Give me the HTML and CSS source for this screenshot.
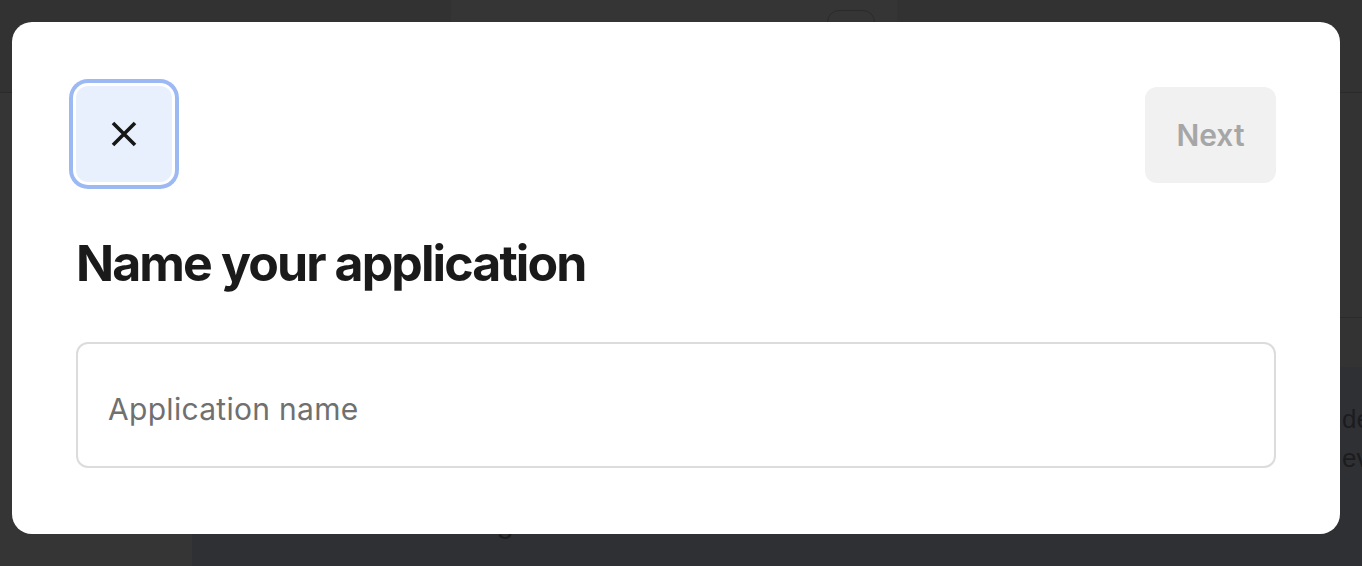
FILE: index.html
```html
<!DOCTYPE html>
<html lang="en">
<head>
<meta charset="utf-8">
<title>Name your application</title>
<link rel="stylesheet" href="styles.css">
</head>
<body>
<div class="app">
  <header class="topbar">
    <div class="topbar-left"></div>
    <div class="search"><span class="search-btn"></span></div>
  </header>
  <div class="layout">
    <aside class="sidebar"></aside>
    <main class="main">
      <section class="main-top"></section>
      <section class="main-tabs"></section>
      <section class="main-content">
        <p class="bg-line indent">details</p>
        <p class="bg-line indent">events</p>
        <p class="bg-line gap">Console settings.</p>
      </section>
    </main>
  </div>
</div>

<div class="modal" role="dialog" aria-labelledby="modal-title">
  <div class="modal-head">
    <button class="close-btn" type="button" aria-label="Close">
      <svg width="26" height="26" viewBox="0 0 26 26" aria-hidden="true">
        <path d="M2 2 L24 24 M24 2 L2 24" stroke="#161616" stroke-width="3.6" fill="none"/>
      </svg>
    </button>
    <button class="next-btn" type="button" disabled>Next</button>
  </div>
  <h1 class="modal-title" id="modal-title">Name your application</h1>
  <input class="name-input" type="text" placeholder="Application name">
</div>
</body>
</html>
```

FILE: styles.css
```css
* { box-sizing: border-box; }

html, body {
  margin: 0;
  padding: 0;
  width: 1362px;
  height: 566px;
  overflow: hidden;
  background: #2f3033;
  font-family: "Liberation Sans", Arial, sans-serif;
}

.app {
  display: flex;
  flex-direction: column;
  height: 566px;
}

.topbar {
  height: 93px;
  flex-shrink: 0;
  display: flex;
  background: #323232;
  border-bottom: 1px solid #2a2a2a;
}

.topbar-left { width: 451px; flex-shrink: 0; }

.search {
  width: 446px;
  flex-shrink: 0;
  background: #353535;
  display: flex;
  justify-content: flex-end;
  padding-right: 22px;
  padding-top: 10px;
}

.search-btn {
  width: 48px;
  height: 60px;
  border: 1px solid #2a2a2a;
  border-radius: 12px;
}

.layout {
  flex: 1;
  display: flex;
  min-height: 0;
}

.sidebar {
  width: 192px;
  flex-shrink: 0;
  background: #353535;
}

.main {
  flex: 1;
  min-width: 0;
  overflow: hidden;
  display: flex;
  flex-direction: column;
}

.main-top {
  height: 225px;
  flex-shrink: 0;
  background: #333333;
  border-bottom: 1px solid #2b2b2b;
}

.main-tabs {
  height: 49px;
  flex-shrink: 0;
  background: #333333;
}

.main-content {
  flex: 1;
  background: #2f3033;
  padding: 33px 0 0 108px;
}

.bg-line {
  margin: 0;
  font-size: 26px;
  line-height: 39px;
  color: #1c1c1e;
  white-space: nowrap;
}

.indent { text-indent: 1042px; }
.gap { margin-top: 24px; font-size: 31px; }

/* Modal */
.modal {
  position: fixed;
  left: 12px;
  top: 22px;
  width: 1328px;
  height: 512px;
  background: #ffffff;
  border-radius: 20px;
  padding: 63px 64px 0 64px;
  font-family: Inter, "Noto Sans", sans-serif;
}

.modal-head {
  display: flex;
  justify-content: space-between;
  align-items: center;
}

.close-btn {
  width: 96px;
  height: 96px;
  border: none;
  border-radius: 12px;
  background: #e9f0fd;
  display: flex;
  align-items: center;
  justify-content: center;
  padding: 0;
  box-shadow: 0 0 0 3px #ffffff, 0 0 0 7px #9db9f4;
}

.next-btn {
  width: 131px;
  height: 96px;
  margin-top: 2px;
  border: none;
  border-radius: 12px;
  background: #f1f1f1;
  color: #a6a6a6;
  font-family: Inter, "Noto Sans", sans-serif;
  font-size: 30px;
  font-weight: 600;
  padding: 0;
}

.modal-title {
  margin: 50px 0 0 0;
  font-size: 50px;
  line-height: 60px;
  font-weight: 700;
  letter-spacing: -1.9px;
  color: #1a1a1a;
}

.name-input {
  display: block;
  margin-top: 49px;
  width: 1200px;
  height: 126px;
  border: 2px solid #dcdcdc;
  border-radius: 12px;
  padding: 7px 30px 0 30px;
  font-family: Inter, "Noto Sans", sans-serif;
  font-size: 30px;
  letter-spacing: 0.3px;
  color: #1a1a1a;
  background: #ffffff;
  outline: none;
}

.name-input::placeholder {
  color: #707070;
}
```
